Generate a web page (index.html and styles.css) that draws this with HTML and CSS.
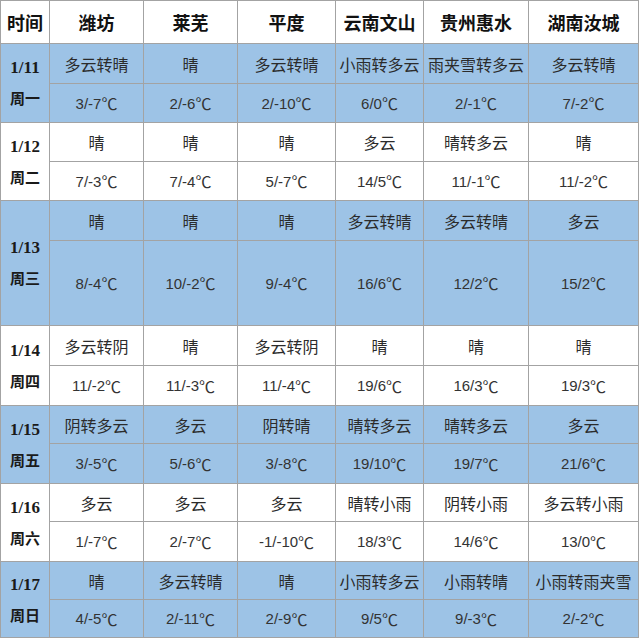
FILE: index.html
```html
<!DOCTYPE html>
<html lang="zh">
<head>
<meta charset="utf-8">
<title>天气</title>
<link rel="stylesheet" href="styles.css">
</head>
<body>
<div class="grid">
  <div class="c head">时间</div>
  <div class="c head">潍坊</div>
  <div class="c head">莱芜</div>
  <div class="c head">平度</div>
  <div class="c head">云南文山</div>
  <div class="c head">贵州惠水</div>
  <div class="c head">湖南汝城</div>

  <div class="c date blue"><span class="d">1/11</span><span class="w">周一</span></div>
  <div class="c wx blue">多云转晴</div>
  <div class="c wx blue">晴</div>
  <div class="c wx blue">多云转晴</div>
  <div class="c wx blue">小雨转多云</div>
  <div class="c wx blue">雨夹雪转多云</div>
  <div class="c wx blue">多云转晴</div>
  <div class="c t blue">3/-7<span class="u">℃</span></div>
  <div class="c t blue">2/-6<span class="u">℃</span></div>
  <div class="c t blue">2/-10<span class="u">℃</span></div>
  <div class="c t blue">6/0<span class="u">℃</span></div>
  <div class="c t blue">2/-1<span class="u">℃</span></div>
  <div class="c t blue">7/-2<span class="u">℃</span></div>

  <div class="c date"><span class="d">1/12</span><span class="w">周二</span></div>
  <div class="c wx">晴</div>
  <div class="c wx">晴</div>
  <div class="c wx">晴</div>
  <div class="c wx">多云</div>
  <div class="c wx">晴转多云</div>
  <div class="c wx">晴</div>
  <div class="c t">7/-3<span class="u">℃</span></div>
  <div class="c t">7/-4<span class="u">℃</span></div>
  <div class="c t">5/-7<span class="u">℃</span></div>
  <div class="c t">14/5<span class="u">℃</span></div>
  <div class="c t">11/-1<span class="u">℃</span></div>
  <div class="c t">11/-2<span class="u">℃</span></div>

  <div class="c date blue"><span class="d">1/13</span><span class="w">周三</span></div>
  <div class="c wx blue">晴</div>
  <div class="c wx blue">晴</div>
  <div class="c wx blue">晴</div>
  <div class="c wx blue">多云转晴</div>
  <div class="c wx blue">多云转晴</div>
  <div class="c wx blue">多云</div>
  <div class="c t blue">8/-4<span class="u">℃</span></div>
  <div class="c t blue">10/-2<span class="u">℃</span></div>
  <div class="c t blue">9/-4<span class="u">℃</span></div>
  <div class="c t blue">16/6<span class="u">℃</span></div>
  <div class="c t blue">12/2<span class="u">℃</span></div>
  <div class="c t blue">15/2<span class="u">℃</span></div>

  <div class="c date"><span class="d">1/14</span><span class="w">周四</span></div>
  <div class="c wx">多云转阴</div>
  <div class="c wx">晴</div>
  <div class="c wx">多云转阴</div>
  <div class="c wx">晴</div>
  <div class="c wx">晴</div>
  <div class="c wx">晴</div>
  <div class="c t">11/-2<span class="u">℃</span></div>
  <div class="c t">11/-3<span class="u">℃</span></div>
  <div class="c t">11/-4<span class="u">℃</span></div>
  <div class="c t">19/6<span class="u">℃</span></div>
  <div class="c t">16/3<span class="u">℃</span></div>
  <div class="c t">19/3<span class="u">℃</span></div>

  <div class="c date blue"><span class="d">1/15</span><span class="w">周五</span></div>
  <div class="c wx blue">阴转多云</div>
  <div class="c wx blue">多云</div>
  <div class="c wx blue">阴转晴</div>
  <div class="c wx blue">晴转多云</div>
  <div class="c wx blue">晴转多云</div>
  <div class="c wx blue">多云</div>
  <div class="c t blue">3/-5<span class="u">℃</span></div>
  <div class="c t blue">5/-6<span class="u">℃</span></div>
  <div class="c t blue">3/-8<span class="u">℃</span></div>
  <div class="c t blue">19/10<span class="u">℃</span></div>
  <div class="c t blue">19/7<span class="u">℃</span></div>
  <div class="c t blue">21/6<span class="u">℃</span></div>

  <div class="c date"><span class="d">1/16</span><span class="w">周六</span></div>
  <div class="c wx">多云</div>
  <div class="c wx">多云</div>
  <div class="c wx">多云</div>
  <div class="c wx">晴转小雨</div>
  <div class="c wx">阴转小雨</div>
  <div class="c wx">多云转小雨</div>
  <div class="c t">1/-7<span class="u">℃</span></div>
  <div class="c t">2/-7<span class="u">℃</span></div>
  <div class="c t">-1/-10<span class="u">℃</span></div>
  <div class="c t">18/3<span class="u">℃</span></div>
  <div class="c t">14/6<span class="u">℃</span></div>
  <div class="c t">13/0<span class="u">℃</span></div>

  <div class="c date blue"><span class="d">1/17</span><span class="w">周日</span></div>
  <div class="c wx blue">晴</div>
  <div class="c wx blue">多云转晴</div>
  <div class="c wx blue">晴</div>
  <div class="c wx blue">小雨转多云</div>
  <div class="c wx blue">小雨转晴</div>
  <div class="c wx blue">小雨转雨夹雪</div>
  <div class="c t blue">4/-5<span class="u">℃</span></div>
  <div class="c t blue">2/-11<span class="u">℃</span></div>
  <div class="c t blue">2/-9<span class="u">℃</span></div>
  <div class="c t blue">9/5<span class="u">℃</span></div>
  <div class="c t blue">9/-3<span class="u">℃</span></div>
  <div class="c t blue">2/-2<span class="u">℃</span></div>
</div>
</body>
</html>
```
FILE: styles.css
```css
html, body {
  margin: 0;
  padding: 0;
  background: #ffffff;
}

.grid {
  display: grid;
  width: 639px;
  box-sizing: border-box;
  padding: 1px;
  gap: 1px;
  background: #a3a3a3;
  grid-template-columns: 48px 93px 93px 97px 87px 104px 109px;
  grid-template-rows: 42px 39px 38px 38px 38px 39px 84px 39px 39px 37px 39px 37px 39px 37px 37px;
}

.c {
  background: #ffffff;
  display: flex;
  align-items: center;
  justify-content: center;
  white-space: nowrap;
  color: #2b2b2b;
}

.c.blue {
  background: #9dc3e6;
}

.head {
  font-family: "Noto Sans CJK SC", sans-serif;
  font-weight: 700;
  font-size: 18px;
  color: #111111;
}

.date {
  grid-row: span 2;
  flex-direction: column;
  color: #1a1a1a;
}

.date .d {
  font-family: "Liberation Serif", "Noto Sans CJK SC", serif;
  font-weight: 700;
  font-size: 17px;
  line-height: 30px;
}

.date .w {
  font-family: "Noto Sans CJK SC", sans-serif;
  font-weight: 700;
  font-size: 15px;
  line-height: 30px;
}

.wx {
  font-family: "Noto Sans CJK SC", sans-serif;
  font-size: 16px;
}

.t {
  font-family: "Liberation Sans", "Noto Sans CJK SC", sans-serif;
  font-size: 15px;
  color: #333333;
}

.t .u {
  font-family: "Noto Sans CJK SC", sans-serif;
  font-size: 16px;
  font-feature-settings: "fwid" 1;
}
```
